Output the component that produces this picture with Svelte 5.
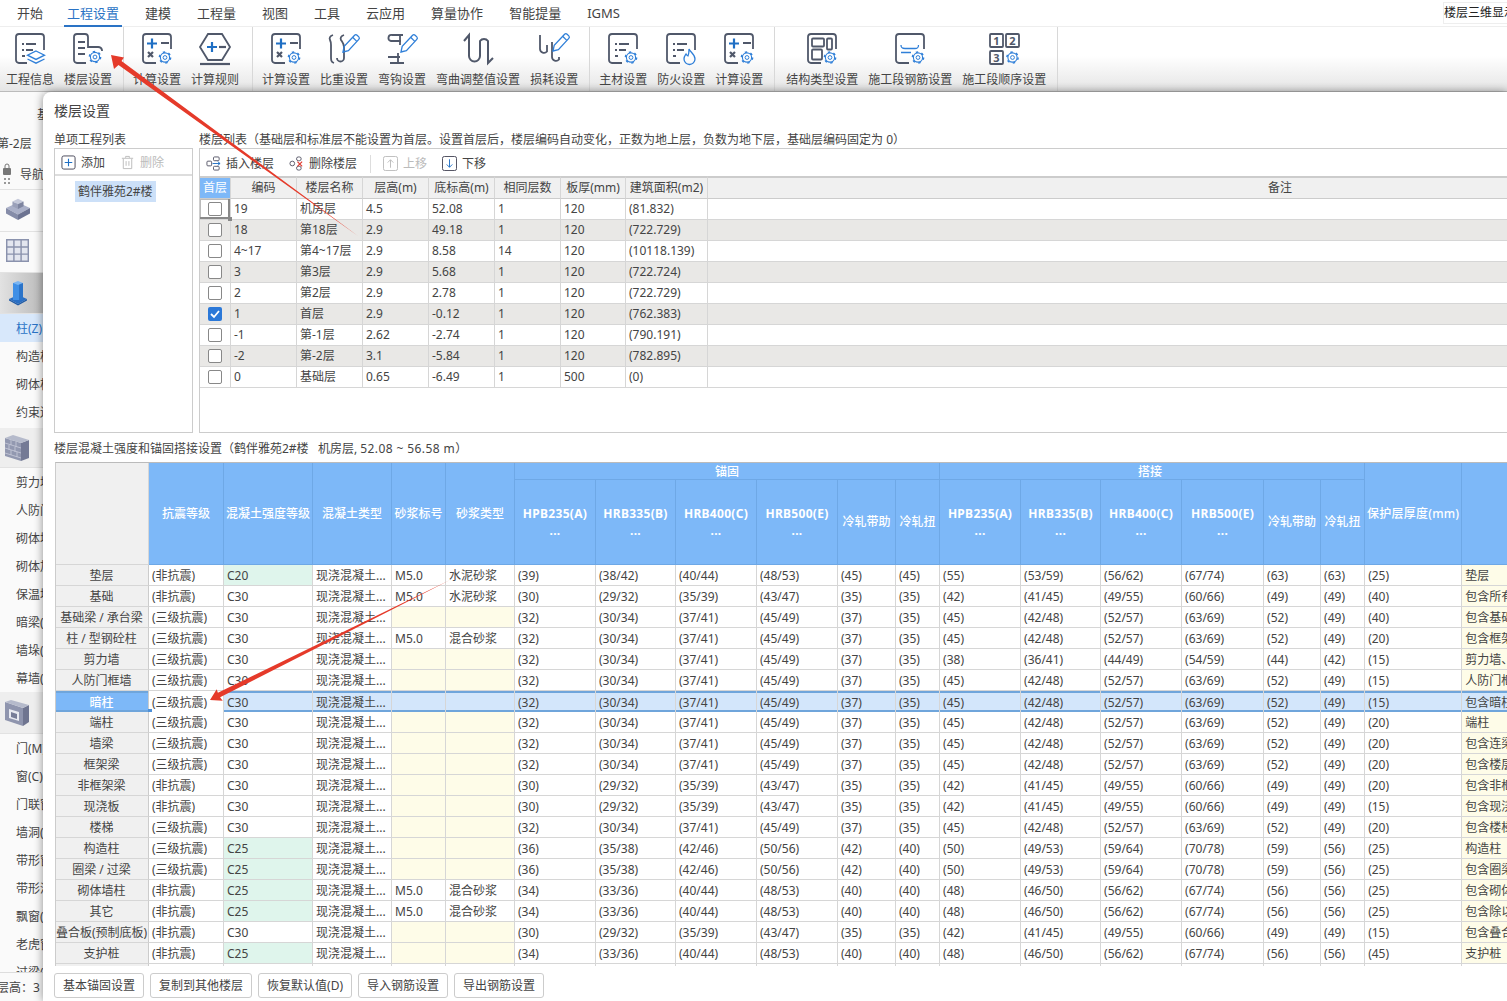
<script>
	const menus = ['开始', '工程设置', '建模', '工程量', '视图', '工具', '云应用', '算量协作', '智能提量', 'IGMS'];

	const ribbon = [
		[['info', '工程信息'], ['floor', '楼层设置']],
		[['calc', '计算设置'], ['rule', '计算规则']],
		[['calc', '计算设置'], ['ratio', '比重设置'], ['hook', '弯钩设置'], ['bend', '弯曲调整值设置'], ['loss', '损耗设置']],
		[['material', '主材设置'], ['fire', '防火设置'], ['calc', '计算设置']],
		[['struct', '结构类型设置'], ['rebar', '施工段钢筋设置'], ['order', '施工段顺序设置']]
	];

	const floors = [
		['19', '机房层', '4.5', '52.08', '1', '120', '(81.832)'],
		['18', '第18层', '2.9', '49.18', '1', '120', '(722.729)'],
		['4~17', '第4~17层', '2.9', '8.58', '14', '120', '(10118.139)'],
		['3', '第3层', '2.9', '5.68', '1', '120', '(722.724)'],
		['2', '第2层', '2.9', '2.78', '1', '120', '(722.729)'],
		['1', '首层', '2.9', '-0.12', '1', '120', '(762.383)'],
		['-1', '第-1层', '2.62', '-2.74', '1', '120', '(790.191)'],
		['-2', '第-2层', '3.1', '-5.84', '1', '120', '(782.895)'],
		['0', '基础层', '0.65', '-6.49', '1', '500', '(0)']
	];
	const floorCols = [31, 66, 66, 66, 66, 66, 65, 82, 1145];

	const A30 = ['(30)', '(29/32)', '(35/39)', '(43/47)', '(35)', '(35)'];
	const A32 = ['(32)', '(30/34)', '(37/41)', '(45/49)', '(37)', '(35)'];
	const A34 = ['(34)', '(33/36)', '(40/44)', '(48/53)', '(40)', '(40)'];
	const A36 = ['(36)', '(35/38)', '(42/46)', '(50/56)', '(42)', '(40)'];
	const A39 = ['(39)', '(38/42)', '(40/44)', '(48/53)', '(45)', '(45)'];
	const L38 = ['(38)', '(36/41)', '(44/49)', '(54/59)', '(44)', '(42)'];
	const L42 = ['(42)', '(41/45)', '(49/55)', '(60/66)', '(49)', '(49)'];
	const L45 = ['(45)', '(42/48)', '(52/57)', '(63/69)', '(52)', '(49)'];
	const L48 = ['(48)', '(46/50)', '(56/62)', '(67/74)', '(56)', '(56)'];
	const L50 = ['(50)', '(49/53)', '(59/64)', '(70/78)', '(59)', '(56)'];
	const L55 = ['(55)', '(53/59)', '(56/62)', '(67/74)', '(63)', '(63)'];

	const FEI = '(非抗震)';
	const SAN = '(三级抗震)';

	// name, seismic, grade, mortar no, mortar type, anchor, lap, cover, note
	const rows = [
		['垫层', FEI, 'C20', 'M5.0', '水泥砂浆', A39, L55, '(25)', '垫层'],
		['基础', FEI, 'C30', 'M5.0', '水泥砂浆', A30, L42, '(40)', '包含所有的基础'],
		['基础梁 / 承台梁', SAN, 'C30', '', '', A32, L45, '(40)', '包含基础梁'],
		['柱 / 型钢砼柱', SAN, 'C30', 'M5.0', '混合砂浆', A32, L45, '(20)', '包含框架柱'],
		['剪力墙', SAN, 'C30', '', '', A32, L38, '(15)', '剪力墙、预制墙'],
		['人防门框墙', SAN, 'C30', '', '', A32, L45, '(15)', '人防门框墙'],
		['暗柱', SAN, 'C30', '', '', A32, L45, '(15)', '包含暗柱'],
		['端柱', SAN, 'C30', '', '', A32, L45, '(20)', '端柱'],
		['墙梁', SAN, 'C30', '', '', A32, L45, '(20)', '包含连梁'],
		['框架梁', SAN, 'C30', '', '', A32, L45, '(20)', '包含楼层框架梁'],
		['非框架梁', FEI, 'C30', '', '', A30, L42, '(20)', '包含非框架梁'],
		['现浇板', FEI, 'C30', '', '', A30, L42, '(15)', '包含现浇板'],
		['楼梯', SAN, 'C30', '', '', A32, L45, '(20)', '包含楼梯'],
		['构造柱', SAN, 'C25', '', '', A36, L50, '(25)', '构造柱'],
		['圈梁 / 过梁', SAN, 'C25', '', '', A36, L50, '(25)', '包含圈梁'],
		['砌体墙柱', FEI, 'C25', 'M5.0', '混合砂浆', A34, L48, '(25)', '包含砌体柱'],
		['其它', FEI, 'C25', 'M5.0', '混合砂浆', A34, L48, '(25)', '包含除以上'],
		['叠合板(预制底板)', FEI, 'C30', '', '', A30, L42, '(15)', '包含叠合板'],
		['支护桩', FEI, 'C25', '', '', A34, L48, '(45)', '支护桩']
	];
	const cols = [94, 75, 89, 79, 54, 69, 81, 80, 81, 81, 58, 44, 81, 80, 81, 82, 57, 44, 97, 140];
	const bars = ['HPB235(A)', 'HRB335(B)', 'HRB400(C)', 'HRB500(E)'];

	const navA = ['柱(Z)', '构造柱(GZ)', '砌体柱(Z)', '约束边缘'];
	const navB = ['剪力墙(Q)', '人防门框', '砌体墙(Q)', '砌体加筋', '保温墙(Q)', '暗梁(A)', '墙垛(E)', '幕墙(Q)'];
	const navC = ['门(M)', '窗(C)', '门联窗(A)', '墙洞(D)', '带形窗(C)', '带形洞', '飘窗(PC)', '老虎窗', '过梁(G)'];
	const buttons = ['基本锚固设置', '复制到其他楼层', '恢复默认值(D)', '导入钢筋设置', '导出钢筋设置'];
</script>

{#snippet gear(x, y)}
	<g class="bl" transform="translate({x} {y})">
		<circle r="4.6" stroke-width="1.1" />
		<circle r="5.6" stroke-width="1.5" stroke-dasharray="2.4 3.46" />
		<circle r="1.9" stroke-width="1" />
	</g>
{/snippet}

{#snippet pencil(dx, dy)}
	<g class="bl" transform="translate({dx} {dy})">
		<path d="M0 18l1.2-5.6L11.6 1.2a1.8 1.8 0 0 1 2.5 0l1.7 1.7a1.8 1.8 0 0 1 0 2.5L5.4 16.6z" />
		<path d="M9.6 3.2l4.2 4.2" />
	</g>
{/snippet}

{#snippet listLines()}
	<path d="M8 11h2M12 11h10M8 17h2M12 17h7M8 23h3" />
{/snippet}

{#snippet ico(name)}
	<svg class="ic" viewBox="0 0 32 32" width="32" height="32">
		{#if name === 'info'}
			<path d="M13 30H5a3 3 0 0 1-3-3V4a3 3 0 0 1 3-3h22a3 3 0 0 1 3 3v13" />
			{@render listLines()}
			<path class="bl" d="M22 18l8.5 4.2-8.5 4.2-8.5-4.2zM13.5 26l8.500 4.200 8.500-4.200" />
		{:else if name === 'floor'}
			<path d="M14 30H5a3 3 0 0 1-3-3V4a3 3 0 0 1 3-3h8a3 3 0 0 1 3 3v10h10a4 4 0 0 1 4 3v1" />
			<path d="M6 9h7M6 15h7M6 21h7" />
			{@render gear(23, 24)}
		{:else if name === 'calc'}
			<path d="M15 30H5a3 3 0 0 1-3-3V4a3 3 0 0 1 3-3h22a3 3 0 0 1 3 3v12" />
			<path class="bl2" d="M6 10.500h10M11 5.500v10" />
			<path class="b2" d="M20 10h8M7 19l5 5M12 19l-5 5" />
			{@render gear(24, 24.500)}
		{:else if name === 'rule'}
			<path d="M9 2h14l8 13-8 13H9L1 15z" transform="translate(0 -1)" />
			<path class="bl2" d="M8 14h10M13 9v10" />
			<path class="b2" d="M20 14h7" />
			<path class="b2" d="M1 31h30" />
		{:else if name === 'ratio'}
			<path d="M5 2C2 3 1 5 2 7c1 2 1 3 1 5v12c0 3 0 5 3 6M16 2c-3 1-4 3-3 5 2 3 3 4 3 7v11a3.500 3.500 0 0 1-7 0" />
			{@render pencil(15, 1)}
		{:else if name === 'hook'}
			<path d="M17 2H6a3 3 0 0 0-1 6h10M14 2v10M12 20v10M2 24h12M4 30h14" />
			{@render pencil(15, 1)}
		{:else if name === 'bend'}
			<path d="M2 8l5-6v21a5.500 5.500 0 0 0 11 0V8a5 5 0 0 1 8 0v22l5-5" stroke-width="2" />
		{:else if name === 'loss'}
			<path d="M2 2v14a4 4 0 0 0 7 2.500V12M14 9v15a4 4 0 0 0 7 2.500V24" />
			{@render pencil(15, 0)}
		{:else if name === 'material'}
			<path d="M15 30H5a3 3 0 0 1-3-3V4a3 3 0 0 1 3-3h22a3 3 0 0 1 3 3v12" />
			{@render listLines()}
			{@render gear(24, 24.500)}
		{:else if name === 'fire'}
			<path d="M15 30H5a3 3 0 0 1-3-3V4a3 3 0 0 1 3-3h22a3 3 0 0 1 3 3v13" />
			{@render listLines()}
			<path class="bl" d="M24 16c1 3 6 5 6 10a5.500 5.500 0 0 1-11 0c0-2.500 1-3.500 2-5 .5 1 1 1.500 2 2 1-2 1-4.500 1-7z" stroke-width="1.800" />
		{:else if name === 'struct'}
			<path d="M15 30H5a3 3 0 0 1-3-3V4a3 3 0 0 1 3-3h22a3 3 0 0 1 3 3v12" />
			<rect x="6" y="5.500" width="12" height="8" rx="1" />
			<rect x="21" y="5.500" width="5" height="11" rx="1" />
			<rect x="6" y="16.500" width="10" height="10" rx="1" />
			{@render gear(24, 24.500)}
		{:else if name === 'rebar'}
			<path d="M15 30H5a3 3 0 0 1-3-3V4a3 3 0 0 1 3-3h22a3 3 0 0 1 3 3v12" />
			<path class="bl" d="M7 12c0 3 1 3.500 4 3.500h10c3 0 3.500-1 3.500-3.500M7 19.500h10" stroke-width="1.800" />
			{@render gear(24, 24.500)}
		{:else}
			<rect x="2" y="1" width="13" height="13" rx="1" />
			<rect x="18" y="1" width="13" height="13" rx="1" />
			<rect x="2" y="18" width="13" height="13" rx="1" />
			<text x="8.500" y="11.500">1</text>
			<text x="24.500" y="11.500">2</text>
			<text x="8.500" y="28.500">3</text>
			{@render gear(24.500, 24.500)}
		{/if}
	</svg>
{/snippet}

{#snippet cubeIcon()}
	<svg viewBox="0 0 28 26" width="26" height="24">
		<path d="M1 13l13-6 13 6-13 7z" fill="#aab0c8" />
		<path d="M1 13v6l13 7v-6z" fill="#858ca8" />
		<path d="M27 13v6l-13 7v-6z" fill="#6c7391" />
		<path d="M8 6l6-3 6 3-6 3z" fill="#c5c9da" />
		<path d="M8 6v5l6 3V9z" fill="#9aa0b9" />
		<path d="M20 6v5l-6 3V9z" fill="#7d849f" />
	</svg>
{/snippet}

<div class="page">
	<nav class="menu">
		{#each menus as m, i}
			<span class="tab" class:on={i === 1}>{m}</span>
		{/each}
		<span class="chip"><span>楼层三维显示</span></span>
	</nav>

	<div class="ribbon">
		{#each ribbon as group}
			<div class="group">
				{#each group as [icon, label]}
					<div class="tool">
						{@render ico(icon)}
						<span>{label}</span>
					</div>
				{/each}
			</div>
		{/each}
	</div>

	<aside class="side">
		<div class="tabstub">基</div>
		<div class="floorname">第-2层</div>
		<div class="navhead">
			<svg viewBox="0 0 10 26" width="10" height="26">
				<rect x="1" y="6" width="8" height="7" rx="1" fill="#777" />
				<path d="M3 6V4a2 2 0 0 1 4 0v2" fill="none" stroke="#777" />
				<path d="M2 16h2v2H2zM6 16h2v2H6zM2 20h2v2H2zM6 20h2v2H6z" fill="#999" />
			</svg>
			<span>导航栏</span>
		</div>
		<div class="block first">{@render cubeIcon()}</div>
		<div class="block second">
			<svg viewBox="0 0 24 24" width="23" height="23">
				<rect width="24" height="24" fill="#8a92ad" />
				<path d="M1.500 1.500h6v6h-6zM9 1.500h6v6H9zM16.500 1.500h6v6h-6zM1.500 9h6v6h-6zM9 9h6v6H9zM16.500 9h6v6h-6zM1.500 16.500h6v6h-6zM9 16.500h6v6H9zM16.500 16.500h6v6h-6z" fill="#e3e6ef" />
			</svg>
		</div>
		<div class="block active">
			<svg viewBox="0 0 20 26" width="20" height="26">
				<path d="M1 19l9-4 9 4-9 5z" fill="#2a6fc4" />
				<path d="M1 19v1.500l9 5 9-5V19l-9 5z" fill="#1f5aa6" />
				<rect x="5" y="3" width="10" height="17" fill="#3f8fe6" />
				<rect x="11" y="3" width="4" height="17" fill="#2b74c9" />
				<path d="M5 3l5-2 5 2-5 2z" fill="#7ab5f2" />
			</svg>
		</div>
		{#each navA as n, i}
			<div class="nav" class:cur={i === 0}>{n}</div>
		{/each}
		<div class="block wall">
			<svg viewBox="0 0 24 26" width="24" height="26">
				<path d="M0 3l16 5v18L0 21z" fill="#9298b0" />
				<path d="M16 8l8-3v18l-8 3z" fill="#747a95" />
				<path d="M0 3l8-3 16 5-8 3z" fill="#b5bacb" />
				<path d="M0 8l16 5M0 13l16 5M0 18l16 5M6 5v5M11 7v5M4 10v5M10 12v5M6 15v5M12 17v5" stroke="#c9ccda" stroke-width=".8" fill="none" />
			</svg>
		</div>
		{#each navB as n}
			<div class="nav">{n}</div>
		{/each}
		<div class="block door">
			<svg viewBox="0 0 24 26" width="24" height="26">
				<path d="M0 2l18 6v18L0 20z" fill="#8f95ae" />
				<path d="M18 8l6-3v17l-6 4z" fill="#6f7590" />
				<path d="M0 2l6-2 18 5-6 3z" fill="#b5bacb" />
				<path d="M4 9l10 3v9L4 18z" fill="#e8eaf1" />
				<path d="M6 12l6 2v5l-6-2z" fill="#777d98" />
			</svg>
		</div>
		<div class="navlist">
			{#each navC as n}
				<div class="nav">{n}</div>
			{/each}
		</div>
		<div class="foot">层高：3</div>
	</aside>

	<section class="dialog">
		<h1>楼层设置</h1>
		<div class="upper">
			<div class="proj">
				<div class="cap">单项工程列表</div>
				<div class="panel">
					<div class="bar small">
						<span class="act">
							<svg viewBox="0 0 16 16" width="15" height="15"><rect x="1" y="1" width="14" height="14" rx="2" fill="none" stroke="#445" /><path d="M8 4v8M4 8h8" stroke="#1f6fc4" stroke-width="1.200" /></svg>
							添加
						</span>
						<span class="act off">
							<svg viewBox="0 0 16 16" width="15" height="15" fill="none" stroke="#bbb"><path d="M2 3.500h12M6 3V1.500h4V3M3.500 4v10.500h9V4M6.500 6.500v5M9.500 6.500v5" /></svg>
							删除
						</span>
					</div>
					<div class="projitem"><span>鹤伴雅苑2#楼</span></div>
				</div>
			</div>
			<div class="floors">
				<div class="cap">楼层列表（基础层和标准层不能设置为首层。设置首层后，楼层编码自动变化，正数为地上层，负数为地下层，基础层编码固定为 0）</div>
				<div class="panel right">
					<div class="bar">
						<span class="act">
							<svg viewBox="0 0 16 16" width="15" height="15" fill="none" stroke="#556"><rect x="1" y="5.500" width="5" height="5" rx="1" /><rect x="8" y="1" width="6" height="4" rx="1" /><rect x="8" y="11" width="6" height="4" rx="1" /><path d="M7 8h8M12.500 6l2.500 2-2.500 2" stroke="#1f6fc4" /></svg>
							插入楼层
						</span>
						<span class="act">
							<svg viewBox="0 0 16 16" width="15" height="15" fill="none" stroke="#556"><rect x="1" y="5.500" width="5" height="5" rx="2.500" /><rect x="8" y="1" width="5" height="4" rx="2" /><rect x="8" y="11" width="5" height="4" rx="2" /><path d="M9 6l5 5M14 6l-5 5" stroke="#e03a30" stroke-width="1.300" /></svg>
							删除楼层
						</span>
						<i class="sep"></i>
						<span class="act off">
							<svg viewBox="0 0 16 16" width="15" height="15" fill="none" stroke="#bbb"><rect x=".5" y=".5" width="15" height="15" rx="2" /><path d="M8 12.500V4M5 7l3-3 3 3" /></svg>
							上移
						</span>
						<span class="act">
							<svg viewBox="0 0 16 16" width="15" height="15" fill="none" stroke="#445"><rect x=".5" y=".5" width="15" height="15" rx="2" /><path d="M8 3.500V12M5 9l3 3 3-3" stroke="#1f6fc4" /></svg>
							下移
						</span>
					</div>
					<div class="gridwrap">
						<table class="grid top">
							<colgroup>
								{#each floorCols as w}<col style="width:{w}px" />{/each}
							</colgroup>
							<thead>
								<tr>
									<th class="firsth">首层</th>
									<th>编码</th><th>楼层名称</th><th>层高(m)</th><th>底标高(m)</th>
									<th>相同层数</th><th>板厚(mm)</th><th>建筑面积(m2)</th><th>备注</th>
								</tr>
							</thead>
							<tbody>
								{#each floors as f, i}
									<tr class:alt={i % 2 === 1}>
										<td class="chk" class:focus={i === 0}>
											<span class="box" class:ticked={f[0] === '1'}>
												{#if f[0] === '1'}
													<svg viewBox="0 0 14 14" width="14" height="14"><path d="M3 7l3 3 5-6" fill="none" stroke="#fff" stroke-width="1.800" /></svg>
												{/if}
											</span>
											{#if i === 0}<i class="handle gray"></i>{/if}
										</td>
										{#each f as v}<td>{v}</td>{/each}
										<td></td>
									</tr>
								{/each}
							</tbody>
						</table>
					</div>
				</div>
			</div>
		</div>

		<div class="cap second">楼层混凝土强度和锚固搭接设置（鹤伴雅苑2#楼&nbsp;&nbsp;&nbsp;机房层, <span class="range">52.08 ~ 56.58 m</span>）</div>

		<div class="tablewrap">
			<table class="grid main">
				<colgroup>
					{#each cols as w}<col style="width:{w}px" />{/each}
				</colgroup>
				<thead>
					<tr class="r1">
						<th rowspan="2" class="corner"></th>
						<th rowspan="2">抗震等级</th>
						<th rowspan="2">混凝土强度等级</th>
						<th rowspan="2">混凝土类型</th>
						<th rowspan="2">砂浆标号</th>
						<th rowspan="2">砂浆类型</th>
						<th colspan="6" class="group-h">锚固</th>
						<th colspan="6" class="group-h lap">搭接</th>
						<th rowspan="2" class="cover">保护层厚度(mm)</th>
						<th rowspan="2"></th>
					</tr>
					<tr class="r2">
						{#each [0, 1] as _}
							{#each bars as b}
								<th class="steel">{b}<br />...</th>
							{/each}
							<th>冷轧带助</th>
							<th>冷轧扭</th>
						{/each}
					</tr>
				</thead>
				<tbody>
					{#each rows as r, i}
						<tr class:sel={i === 6}>
							<td class="name">{r[0]}</td>
							<td class="seis">
								{r[1]}
								{#if i === 6}<i class="handle"></i>{/if}
							</td>
							<td class:green={r[2] !== 'C30'}>{r[2]}</td>
							<td>现浇混凝土...</td>
							<td class:cream={!r[3]}>{r[3]}</td>
							<td class:cream={!r[4]}>{r[4]}</td>
							{#each r[5] as v}<td>{v}</td>{/each}
							{#each r[6] as v}<td>{v}</td>{/each}
							<td>{r[7]}</td>
							<td class="cream">{r[8]}</td>
						</tr>
					{/each}
					<tr>
						<td class="name"></td>
						{#each cols.slice(1) as _}<td></td>{/each}
					</tr>
				</tbody>
			</table>
		</div>

		<div class="buttons">
			{#each buttons as b}<button>{b}</button>{/each}
		</div>
	</section>

	<svg class="arrows" viewBox="0 0 1507 1001" width="1507" height="1001">
		<polygon points="111,55 124,57.500 121.500,61 358,236 118.500,65 114,69" />
		<polygon points="210,700 216.700,689.300 217.900,692.800 450,580 220.100,697.200 222.700,700.700" />
	</svg>
</div>

<style>
	:global(body) {
		margin: 0;
		background: #fff;
	}

	.page {
		position: relative;
		width: 1507px;
		height: 1001px;
		overflow: hidden;
		background: #fff;
		color: #444;
		font: 12px/20px "Noto Sans", "Noto Sans CJK SC", sans-serif;
	}

	.menu {
		display: flex;
		align-items: center;
		height: 26px;
		padding-left: 4px;
		border-bottom: 1px solid #eee;
		font-size: 13px;
	}

	.tab {
		position: relative;
		padding: 0 13px;
		line-height: 26px;
	}

	.tab:first-child {
		padding-right: 11px;
	}

	.tab.on {
		color: #2a73c5;
	}

	.tab.on::after {
		content: "";
		position: absolute;
		left: 10px;
		right: 10px;
		bottom: -1px;
		height: 2px;
		background: #2a73c5;
	}

	.chip {
		margin-left: auto;
		width: 63px;
		height: 20px;
		overflow: hidden;
		white-space: nowrap;
		font-size: 12px;
		line-height: 20px;
		color: #222;
		border: 1px solid #eee;
		border-right: 0;
	}

	.ribbon {
		display: flex;
		height: 64px;
		padding-left: 1px;
		border-bottom: 1px solid #bbb;
		background: linear-gradient(#fff 45%, #e5e5e5);
	}

	.group {
		display: flex;
		padding: 0 6px 0 4px;
		border-right: 1px solid #d8d8d8;
	}

	.group:first-child {
		padding-left: 0;
	}

	.group:nth-child(2) {
		padding-right: 8px;
	}

	.group:last-child {
		padding-left: 6px;
	}

	.tool {
		display: flex;
		flex-direction: column;
		align-items: center;
		padding: 6px 5px 0;
		white-space: nowrap;
	}

	.tool span {
		margin-top: 5px;
	}

	.ic {
		overflow: visible;
		fill: none;
		stroke: #50586a;
		stroke-width: 1.800;
	}

	.ic .bl {
		stroke: #2f7fd8;
		stroke-width: 1.300;
	}

	.ic .bl2 {
		stroke: #1f6fc4;
		stroke-width: 2.200;
	}

	.ic .b2 {
		stroke-width: 2.200;
	}

	.ic text {
		fill: #50586a;
		stroke: none;
		font-size: 11px;
		font-weight: 700;
		text-anchor: middle;
	}

	.side {
		display: flex;
		flex-direction: column;
		width: 43px;
		height: 909px;
		overflow: hidden;
		white-space: nowrap;
		background: #fafafa;
	}

	.side svg {
		flex: none;
	}

	.tabstub {
		height: 38px;
		flex: none;
		padding: 13px 0 0 37px;
		box-sizing: border-box;
	}

	.floorname {
		height: 27px;
		flex: none;
		line-height: 28px;
		margin-left: -3px;
	}

	.navhead {
		display: flex;
		align-items: center;
		flex: none;
		gap: 8px;
		height: 33px;
		padding: 3px 0 0 2px;
		box-sizing: border-box;
		border-bottom: 1px solid #e2e2e2;
	}

	.block {
		display: flex;
		align-items: center;
		flex: none;
		padding-left: 5px;
		box-sizing: border-box;
		height: 42px;
		border-bottom: 1px solid #e2e2e2;
	}

	.block.first {
		padding-bottom: 5px;
	}

	.block.second {
		height: 41px;
		padding-bottom: 3px;
		padding-left: 6px;
	}

	.block.active {
		height: 41px;
		padding-left: 8px;
		background: linear-gradient(90deg, #e2e2e2, #bdbdbd 40px);
	}

	.block.wall {
		height: 40px;
		margin-top: 2px;
		background: #eee;
	}

	.block.door {
		background: #eee;
	}

	.nav {
		height: 28px;
		line-height: 30px;
		padding-left: 16px;
		flex: none;
	}

	.nav.cur {
		color: #2a73c5;
		background: #d8e8fb;
	}

	.navlist {
		flex: 1;
		min-height: 0;
		overflow: hidden;
	}

	.foot {
		height: 29px;
		flex: none;
		line-height: 29px;
		margin-left: -3px;
		border-top: 1px solid #ddd;
		box-sizing: border-box;
	}

	.dialog {
		position: absolute;
		left: 43px;
		top: 92px;
		width: 1464px;
		height: 909px;
		padding-left: 11px;
		box-sizing: border-box;
		background: #fff;
		border-top-left-radius: 8px;
		box-shadow: 0 0 10px rgba(0, 0, 0, .45);
	}

	h1 {
		margin: 0;
		height: 38px;
		font-size: 14px;
		font-weight: 400;
		line-height: 38px;
	}

	.upper {
		display: flex;
		gap: 6px;
		height: 303px;
	}

	.proj {
		flex: none;
		width: 139px;
	}

	.floors {
		flex: 1;
		min-width: 0;
	}

	.cap {
		height: 18px;
		line-height: 20px;
		white-space: nowrap;
	}

	.cap.second {
		height: 29px;
		line-height: 32px;
	}

	.range {
		letter-spacing: .4px;
	}

	.panel {
		box-sizing: border-box;
		height: 285px;
		border: 1px solid #ccc;
	}

	.panel.right {
		border-width: 1px 0 1px 1px;
	}

	.bar {
		display: flex;
		align-items: center;
		gap: 15px;
		height: 27px;
		padding: 2px 0 0 6px;
		box-sizing: border-box;
	}

	.bar.small {
		border-bottom: 2px solid #ddd;
	}

	.act {
		display: flex;
		align-items: center;
		gap: 5px;
	}

	.act.off {
		color: #bbb;
	}

	.sep {
		width: 1px;
		height: 18px;
		margin: 0 -3px 0 -2px;
		background: #ddd;
	}

	.projitem {
		padding: 5px 0 0 20px;
	}

	.projitem span {
		display: inline-block;
		height: 21px;
		padding: 0 3px;
		line-height: 22px;
		background: #cce0f8;
	}

	.gridwrap {
		overflow: hidden;
	}

	.grid {
		table-layout: fixed;
		border-collapse: separate;
		border-spacing: 0;
	}

	.grid.top {
		width: 1653px;
	}

	.grid th,
	.grid td {
		box-sizing: border-box;
		padding: 0 0 0 3px;
		border-right: 1px solid #d6d6d6;
		border-bottom: 1px solid #d6d6d6;
		white-space: nowrap;
		overflow: hidden;
		font-weight: 400;
	}

	.top th {
		height: 22px;
		padding: 0;
		background: #f0f0f0;
		border-top: 2px solid #ccc;
		border-bottom-color: #ccc;
		text-align: center;
	}

	.top th.firsth {
		background: #7db8f8;
		color: #fff;
	}

	.top td {
		height: 21px;
	}

	.top tr.alt td {
		background: #e9e8e6;
	}

	td.chk {
		position: relative;
		padding: 0;
		text-align: center;
		background: #fff;
	}

	td.focus {
		overflow: visible;
		box-shadow: inset -2px -2px #888, inset 1px 1px #bbb;
	}

	.box {
		display: inline-block;
		width: 14px;
		height: 14px;
		box-sizing: border-box;
		vertical-align: -3px;
		border: 1px solid #888;
		border-radius: 2px;
		background: #fff;
	}

	.box.ticked {
		border: 0;
		background: #2b78d8;
	}

	.box svg {
		display: block;
	}

	.handle {
		position: absolute;
		left: -1px;
		bottom: 0;
		width: 4px;
		height: 3px;
		background: #4d90d8;
	}

	.handle.gray {
		left: auto;
		right: -2px;
		bottom: -2px;
		width: 4px;
		height: 4px;
		background: #888;
		z-index: 1;
	}

	.tablewrap {
		box-sizing: border-box;
		height: 504px;
		margin-left: 1px;
		overflow: hidden;
		border-top: 1px solid #bbb;
		border-left: 1px solid #ccc;
	}

	.grid.main {
		width: 1547px;
		margin-left: -1px;
	}

	.main th {
		padding: 0;
		background: #7db8f8;
		color: #fff;
		font-weight: 500;
		text-align: center;
		line-height: 16px;
		border-color: #6ea8e6;
	}

	.main .r1 th {
		height: 17px;
	}

	.main th.group-h {
		line-height: 15px;
		padding-top: 1px;
	}

	.main th.lap {
		padding-right: 4px;
	}

	.main .r2 th {
		height: 85px;
	}

	.main th[rowspan] {
		padding-top: 1px;
	}

	.main th.corner {
		background: #f0f0f0;
		border-color: #d6d6d6;
	}

	.main th.cover {
		letter-spacing: .25px;
	}

	.main th.steel {
		font-weight: 700;
		line-height: 17px;
		letter-spacing: .3px;
	}

	.main td {
		height: 21px;
		padding-top: 2px;
		line-height: 18px;
	}

	.main td.name {
		padding: 2px 0 0;
		background: #f0f0f0;
		text-align: center;
		border-right-color: #ccc;
	}

	.main td.green {
		background: #dff5ec;
	}

	.main td.cream {
		background: #fefce8;
	}

	.seis {
		position: relative;
	}

	.main tr.sel td {
		background: #d3e6fb;
		border-bottom: 0;
		box-shadow: inset 0 2px #6fa5db, inset 0 -2px #6fa5db;
	}

	.main tr.sel td.name {
		background: #7db8f8;
		color: #fff;
		font-weight: 500;
	}

	.main tr.sel td.seis {
		background: #fff;
		box-shadow: none;
		overflow: visible;
	}

	.buttons {
		display: flex;
		gap: 6px;
		margin-top: 7px;
	}

	button {
		height: 25px;
		padding: 0 8px;
		border: 1px solid #ccc;
		border-radius: 3px;
		background: #fff;
		color: #444;
		font: inherit;
	}

	.arrows {
		position: absolute;
		left: 0;
		top: 0;
		pointer-events: none;
	}

	.arrows polygon {
		fill: #e53a2a;
	}
</style>
